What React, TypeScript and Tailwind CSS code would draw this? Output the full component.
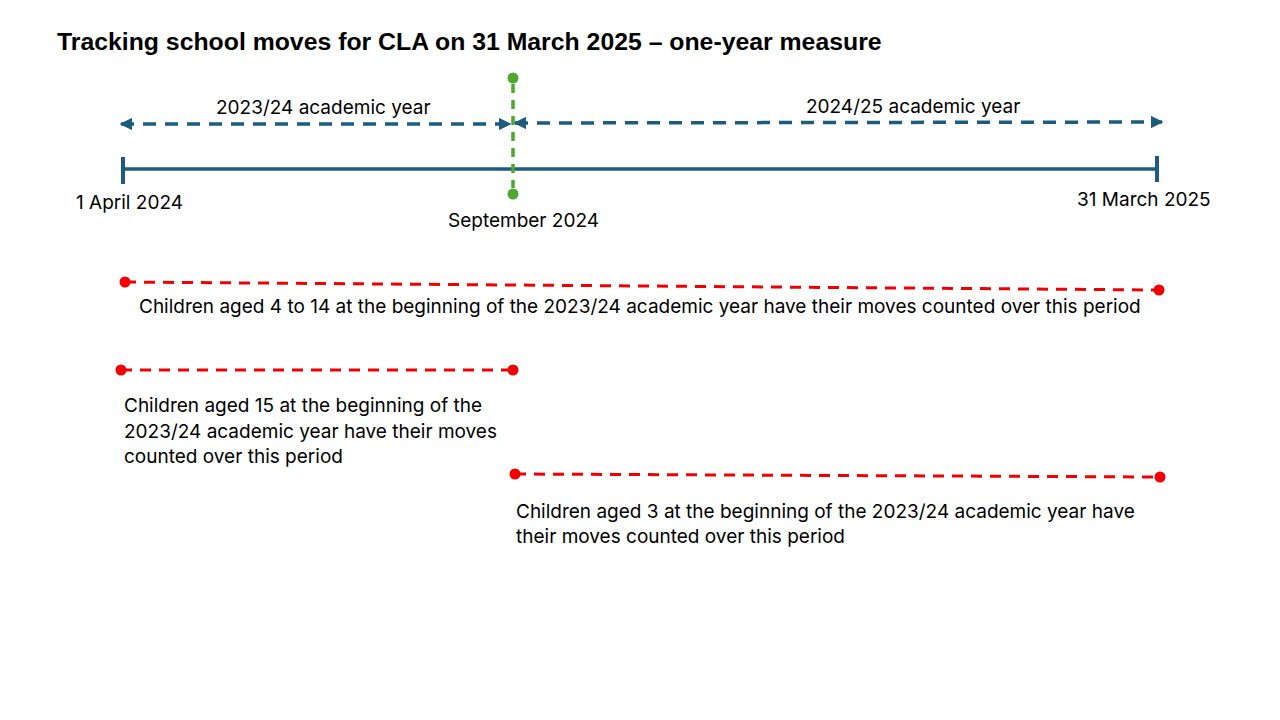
import React from 'react';

const BLUE = '#1b5c7f';
const GREEN = '#4ea72e';
const RED = '#f00000';

// lines, arrows and dots of the timeline
const TimelineDrawing: React.FC = () => (
  <svg className="absolute inset-0" width={1280} height={720} viewBox="0 0 1280 720">
    <defs>
      <marker id="arrowBlue" viewBox="0 0 10 10" refX="9" refY="5" markerWidth="3.6" markerHeight="3.6" orient="auto-start-reverse">
        <path d="M0 0 L10 5 L0 10 Z" fill={BLUE} />
      </marker>
    </defs>

    {/* academic year arrows */}
    <line x1={121} y1={124} x2={510} y2={124} stroke={BLUE} strokeWidth={3.5} strokeDasharray="13 9"
      markerStart="url(#arrowBlue)" markerEnd="url(#arrowBlue)" />
    <line x1={515} y1={123} x2={1162} y2={122} stroke={BLUE} strokeWidth={3.5} strokeDasharray="13 9"
      markerStart="url(#arrowBlue)" markerEnd="url(#arrowBlue)" />

    {/* main axis */}
    <line x1={123} y1={169} x2={1157} y2={169} stroke={BLUE} strokeWidth={3.5} />
    <line x1={123} y1={157} x2={123} y2={184} stroke={BLUE} strokeWidth={4} />
    <line x1={1157} y1={156} x2={1157} y2={182} stroke={BLUE} strokeWidth={4} />

    {/* September marker */}
    <line x1={513} y1={84} x2={513} y2={188} stroke={GREEN} strokeWidth={3.5} strokeDasharray="9 7" />
    <circle cx={513} cy={78} r={5.5} fill={GREEN} />
    <circle cx={513} cy={194} r={5.5} fill={GREEN} />

    {/* periods */}
    <line x1={125} y1={282} x2={1159} y2={290} stroke={RED} strokeWidth={3} strokeDasharray="11 8" />
    <circle cx={125} cy={282} r={5.5} fill={RED} />
    <circle cx={1159} cy={290} r={5.5} fill={RED} />

    <line x1={121} y1={370} x2={513} y2={370} stroke={RED} strokeWidth={3} strokeDasharray="11 8" />
    <circle cx={121} cy={370} r={5.5} fill={RED} />
    <circle cx={513} cy={370} r={5.5} fill={RED} />

    <line x1={515} y1={474} x2={1160} y2={477} stroke={RED} strokeWidth={3} strokeDasharray="11 8" />
    <circle cx={515} cy={474} r={5.5} fill={RED} />
    <circle cx={1160} cy={477} r={5.5} fill={RED} />
  </svg>
);

export default function App() {
  return (
    <div className="relative w-[1280px] h-[720px] overflow-hidden bg-white text-black font-['Inter',sans-serif] text-[19px] pl-[57px] pt-[27px]">
      <TimelineDrawing />

      <h1 className="relative text-[24.8px] leading-[30px] font-bold whitespace-nowrap font-['Liberation_Sans',sans-serif]">
        Tracking school moves for CLA on 31 March 2025 – one-year measure
      </h1>

      {/* timeline labels */}
      <div className="absolute left-[216px] top-[96px] leading-[24px] whitespace-nowrap">2023/24 academic year</div>
      <div className="absolute left-[806px] top-[95px] leading-[24px] whitespace-nowrap">2024/25 academic year</div>
      <div className="absolute left-[76px] top-[191px] leading-[24px] whitespace-nowrap">1 April 2024</div>
      <div className="absolute left-[448px] top-[209px] leading-[24px] whitespace-nowrap">September 2024</div>
      <div className="absolute left-[1077px] top-[188px] leading-[24px] whitespace-nowrap">31 March 2025</div>

      {/* period notes */}
      <p className="absolute left-[139px] top-[294px] leading-[25px] whitespace-nowrap">
        Children aged 4 to 14 at the beginning of the 2023/24 academic year have their moves counted over this period
      </p>
      <p className="absolute left-[124px] top-[393px] leading-[25.5px] whitespace-nowrap">
        Children aged 15 at the beginning of the<br />
        2023/24 academic year have their moves<br />
        counted over this period
      </p>
      <p className="absolute left-[516px] top-[499px] leading-[25px] whitespace-nowrap">
        Children aged 3 at the beginning of the 2023/24 academic year have<br />
        their moves counted over this period
      </p>
    </div>
  );
}
